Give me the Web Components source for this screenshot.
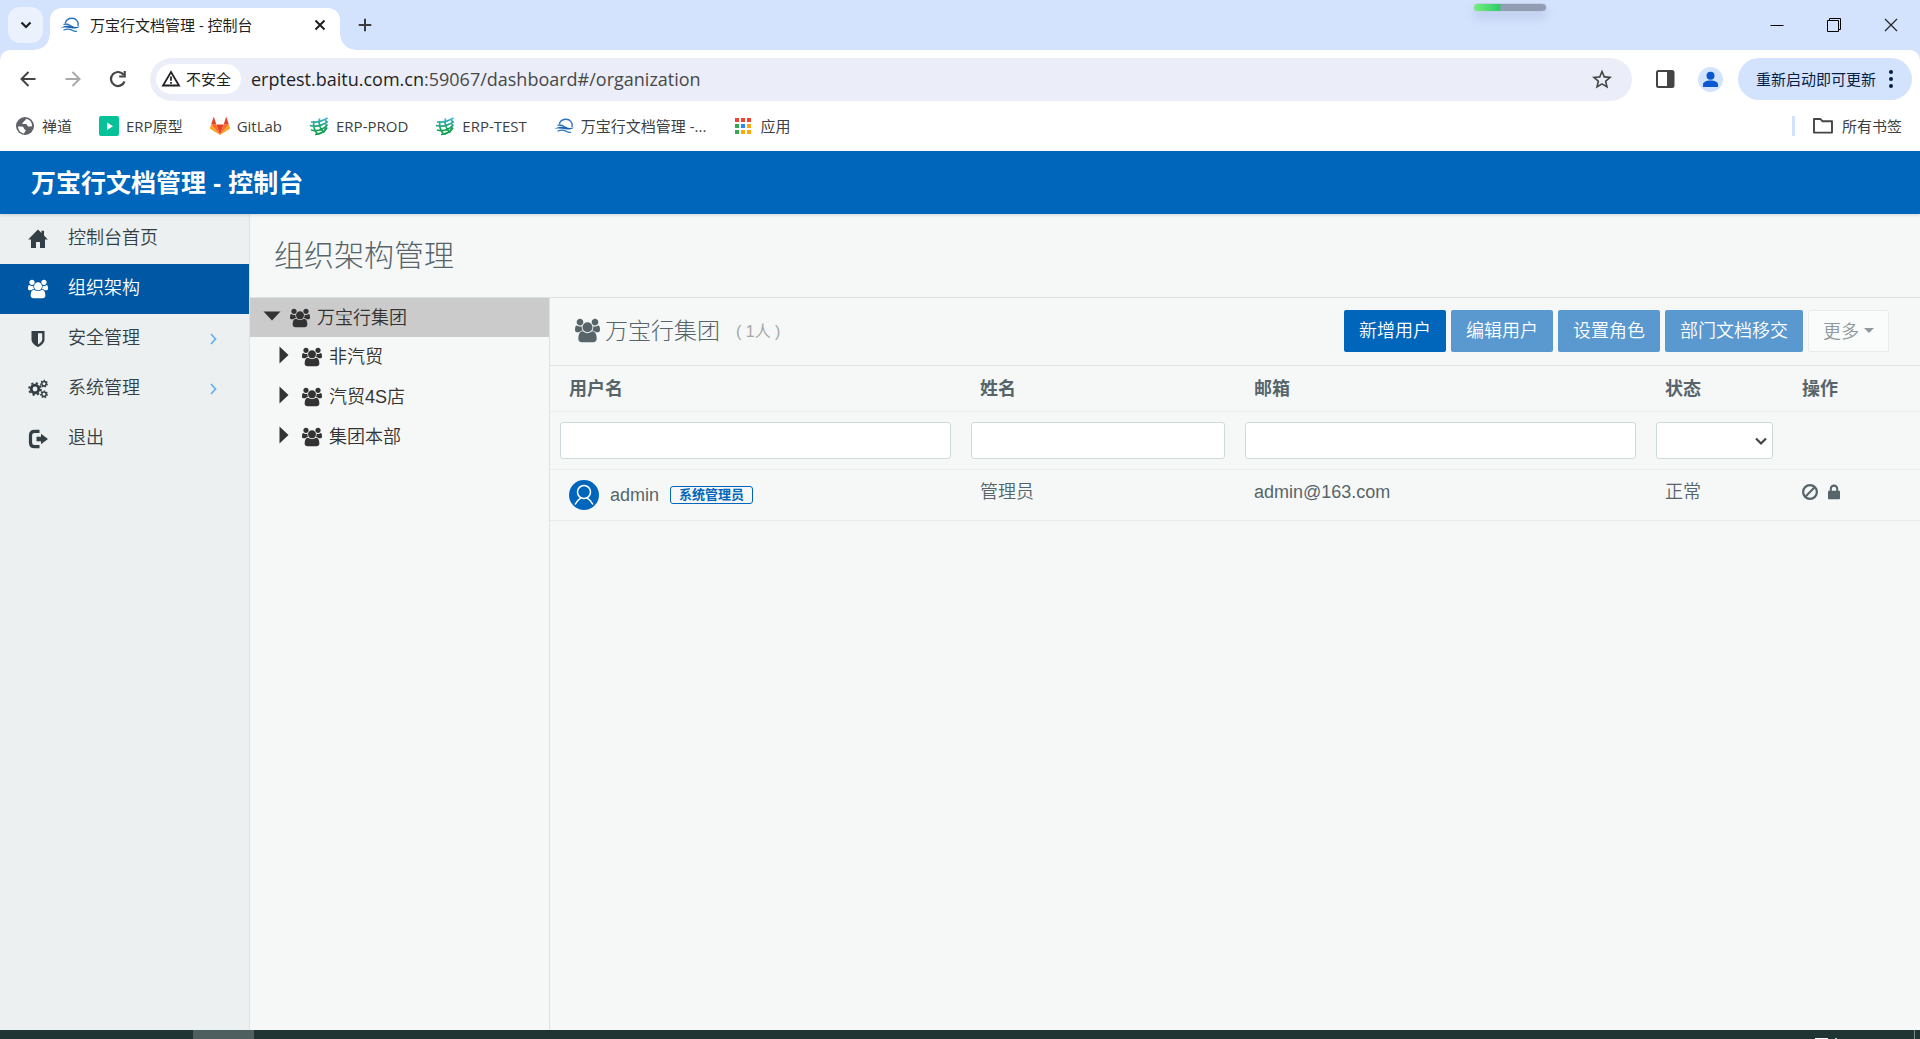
<!DOCTYPE html>
<html lang="zh-CN">
<head>
<meta charset="utf-8">
<title>万宝行文档管理 - 控制台</title>
<style>
  html, body { height: 100%; }
  body {
    margin: 0;
    display: flex;
    flex-direction: column;
    overflow: hidden;
    font-family: "Liberation Sans", "Noto Sans CJK SC", sans-serif;
    font-size: 18px;
    --chrome-font: "Open Sans", "Noto Sans CJK SC", sans-serif;
    --brand: #0066bb;
    --line: #dce2e2;
    --thin: 350;
  }
  main { flex: 1; display: flex; min-height: 0; background: #f5f8f7; }
</style>
</head>
<body>
<tab-strip><span>万宝行文档管理 - 控制台</span></tab-strip>
<address-bar>
  <span slot="status">不安全</span>
  <span slot="host">erptest.baitu.com.cn</span><span slot="path">:59067/dashboard#/organization</span>
  <span slot="update">重新启动即可更新</span>
</address-bar>
<bookmarks-bar>
  <bookmark-link icon="globe">禅道</bookmark-link>
  <bookmark-link icon="play">ERP原型</bookmark-link>
  <bookmark-link icon="fox">GitLab</bookmark-link>
  <bookmark-link icon="net">ERP-PROD</bookmark-link>
  <bookmark-link icon="net">ERP-TEST</bookmark-link>
  <bookmark-link icon="wave">万宝行文档管理 -...</bookmark-link>
  <bookmark-link icon="apps">应用</bookmark-link>
  <bookmark-link slot="end" icon="folder">所有书签</bookmark-link>
</bookmarks-bar>
<console-header>万宝行文档管理 - 控制台</console-header>
<main>
  <side-nav>
    <nav-item icon="home">控制台首页</nav-item>
    <nav-item icon="users" active>组织架构</nav-item>
    <nav-item icon="shield" more>安全管理</nav-item>
    <nav-item icon="cogs" more>系统管理</nav-item>
    <nav-item icon="logout">退出</nav-item>
  </side-nav>
  <organization-page>
    <span slot="title">组织架构管理</span>
    <org-tree slot="tree">
      <tree-row open>万宝行集团</tree-row>
      <tree-row child>非汽贸</tree-row>
      <tree-row child>汽贸4S店</tree-row>
      <tree-row child>集团本部</tree-row>
    </org-tree>
    <user-panel slot="content">
      <span slot="group">万宝行集团</span>
      <span slot="count">( 1人 )</span>
      <action-button slot="actions" kind="primary">新增用户</action-button>
      <action-button slot="actions" kind="primary" off>编辑用户</action-button>
      <action-button slot="actions" kind="primary" off>设置角色</action-button>
      <action-button slot="actions" kind="primary" off>部门文档移交</action-button>
      <action-button slot="actions" kind="plain" off>更多</action-button>
    </user-panel>
  </organization-page>
</main>
<task-bar></task-bar>

<script>
const ICONS = {
  wave: ['0 0 20 20', '<g fill="none" stroke="#2a74bd" stroke-linecap="round"><path d="M5.500 7.500C6.500 4.800 9 3.300 12 3.300c4 0 6.800 3.200 6 7.200" stroke-width="1.400"/><path d="M4 9.300c3-1.200 5.500.7 8.500 2.500" stroke-width="1.300"/><path d="M4 15c3-1.300 6-.8 8 .2 1.500.8 3 1.300 4.500 1.200" stroke-width="1.300"/></g><path fill="#1d64b0" d="M.2 12.800C4 10.300 9 10.300 12 11.200c2.500.8 5 .9 7.800.3-2 2-5.200 2.500-8.300 1.800-4-.9-7-1-11.300-.5z"/>'],
  chevDown: ['0 0 20 20', '<path d="M5.500 7.500 10 12l4.500-4.500" fill="none" stroke="#1f1f1f" stroke-width="2.200"/>'],
  close: ['0 0 20 20', '<path d="m5.500 5.500 9 9m0-9-9 9" fill="none" stroke="#1f1f1f" stroke-width="2"/>'],
  plus: ['0 0 20 20', '<path d="M10 3.700v12.600M3.700 10h12.600" fill="none" stroke="#3c3c3c" stroke-width="2"/>'],
  minimize: ['0 0 20 20', '<path d="M3.500 10.500h13" stroke="#000"/>'],
  restore: ['0 0 20 20', '<path d="M3.500 5.500h11v11h-11zM5.500 5.500v-2h11v11h-2" fill="none" stroke="#000"/>'],
  winClose: ['0 0 20 20', '<path d="m4 4 12 12m0-12L4 16" stroke="#222" stroke-width="1.200"/>'],
  back: ['0 0 20 20', '<path d="M17.500 10H4m6.500-7L3.500 10l7 7" fill="none" stroke="#444" stroke-width="2"/>'],
  forward: ['0 0 20 20', '<path d="M2.500 10H16M9.500 3l7 7-7 7" fill="none" stroke="#a9a9a9" stroke-width="2"/>'],
  reload: ['0 0 20 20', '<path d="M16.500 12.500A7 7 0 1 1 15.700 6" fill="none" stroke="#444" stroke-width="2.200"/><path fill="#444" d="M17.800 2v6.600h-6.600V6.500h4.500V2z"/>'],
  warn: ['0 0 20 20', '<path d="M10 3 18 16.500H2z" fill="none" stroke="#222" stroke-width="1.800"/><path d="M10 7.500v4.300M10 13v1.800" stroke="#222" stroke-width="1.800"/>'],
  star: ['2 1.500 20 20', '<path fill="#444" d="m22 9.240-7.190-.62L12 2 9.190 8.630 2 9.240l5.460 4.730L5.820 21 12 17.270 18.180 21l-1.630-7.030zM12 15.400l-3.760 2.270 1-4.280-3.320-2.880 4.380-.38L12 6.100l1.710 4.040 4.380.38-3.320 2.880 1 4.280z"/>'],
  panel: ['0 0 20 20', '<rect x="2" y="2" width="16.500" height="16" rx="1.500" fill="none" stroke="#444" stroke-width="2"/><path fill="#444" d="M12 2h6v16h-6z"/>'],
  person: ['0 0 25 25', '<circle cx="12.500" cy="12.500" r="12.500" fill="#d3e3fd"/><circle cx="12.500" cy="8.700" r="4" fill="#0b57d0"/><path fill="#0b57d0" d="M5 20v-2.500c0-2.500 3.500-4 7.500-4s7.500 1.500 7.500 4V20z"/>'],
  dots: ['0 0 20 20', '<g fill="#041e49"><circle cx="10" cy="3" r="2"/><circle cx="10" cy="10" r="2"/><circle cx="10" cy="17" r="2"/></g>'],
  globe: ['0 0 20 20', '<circle cx="10" cy="10" r="9" fill="#5f6368"/><path fill="#fff" d="M3 10.500c2 .3 3.800-.3 5.300.8 1 .8.300 1.700 1.500 2.200 1.300.5 1 1.500.2 2.200-.7.600-.6 1.300-1 1.900C5.500 17 3.200 14 3 10.500zM10.500 2.800c.6.800.2 1.600-.8 1.900-1 .3-.8 1.200-1.700 1.700-.9.600-.7 1.600.4 1.700 1.500.1 2.400-.5 3.300.4.900.8.500 1.800 1.800 2 1.300.2 2.300-.6 3.500-.3.300-4-2.500-7-6.500-7.400z"/>'],
  play: ['0 0 20 20', '<rect width="20" height="20" rx="2" fill="#06c298"/><path d="m8 6.500 6 3.700-6 3.700z" fill="#fff"/>'],
  fox: ['0 0 20 20', '<path fill="#e24329" d="m10 19 3.700-10.500H6.300z"/><path fill="#fc6d26" d="M10 19 6.300 8.500H1.200zM10 19l3.700-10.500h5.100z"/><path fill="#fca326" d="M1.200 8.500 0 12c-.1.400 0 .8.400 1L10 19zM18.800 8.500 20 12c.1.400 0 .8-.4 1L10 19z"/><path fill="#e24329" d="M1.200 8.500h5.100L4.100 1.600c-.1-.4-.6-.4-.7 0zM18.800 8.500h-5.100l2.200-6.900c.1-.4.6-.4.7 0z"/>'],
  net: ['0 0 20 20', '<defs><linearGradient id="g" gradientUnits="userSpaceOnUse" x1="10" x2="10" y1="2" y2="18"><stop stop-color="#3db2dc"/><stop offset=".7" stop-color="#12a053"/></linearGradient></defs><g fill="none" stroke="url(#g)" stroke-width="1.700"><path d="M2 6c5 .5 11-.5 16.500-4M.8 9.500c6 1.500 12 .5 18-4M2 14c6 1.500 12 0 16.500-5.500M6 18.500c5-.5 10-3 12-7M5 5c-1 4.500 0 9.500 4 13.500M10.500 2.500c-1 5 .5 10.500 4.500 14M16.500 3c1.500 4.500 1 9-2 13.500"/></g>'],
  apps: ['0 0 20 20', '<path fill="#f04336" d="M2 2h4v4H2zM8 2h4v4H8zM14 2h4v4h-4z"/><path fill="#34a853" d="M2 8h4v4H2zM2 14h4v4H2z"/><path fill="#2a8af6" d="M8 8h4v4H8z"/><path fill="#fbab05" d="M14 8h4v4h-4zM8 14h4v4H8zM14 14h4v4h-4z"/>'],
  folder: ['0 0 20 20', '<path d="M1 3h6.500l2 2.300H19v11.300H1z" fill="none" stroke="#444" stroke-width="1.900" stroke-linejoin="round"/>'],
  home: ['0 0 20 20', '<path fill="currentColor" d="M10 .5 13.500 4V1.800h2.500v4.700l3.800 4H17V19h-5v-6H8v6H3v-8.500H.2z"/>'],
  users: ['0 0 1920 1792', '<path fill="currentColor" d="M593 896q-162 5-265 128h-134q-82 0-138-40.500t-56-118.500q0-353 124-353 6 0 43.500 21t97.500 42.500 119 21.500q67 0 133-23-5 37-5 66 0 139 81 256zm1071 637q0 120-73 189.500t-194 69.500h-874q-121 0-194-69.500t-73-189.500q0-53 3.500-103.500t14-109 26.500-108.500 43-97.500 62-81 85.500-53.500 111.500-20q10 0 43 21.500t73 48 107 48 135 21.500 135-21.500 107-48 73-48 43-21.500q61 0 111.500 20t85.500 53.500 62 81 43 97.500 26.500 108.500 14 109 3.500 103.500zm-1024-1277q0 106-75 181t-181 75-181-75-75-181 75-181 181-75 181 75 75 181zm704 384q0 159-112.500 271.500t-271.500 112.500-271.500-112.500-112.500-271.500 112.500-271.500 271.500-112.500 271.500 112.500 112.500 271.500zm576 225q0 78-56 118.500t-138 40.500h-134q-103-123-265-128 81-117 81-256 0-29-5-66 66 23 133 23 59 0 119-21.500t97.500-42.500 43.500-21q124 0 124 353zm-128-609q0 106-75 181t-181 75-181-75-75-181 75-181 181-75 181 75 75 181z"/>'],
  shield: ['0 0 20 20', '<path fill="currentColor" fill-rule="evenodd" d="M3.500 2h13v8.500c0 3.500-3.500 6-6.500 7.500-3-1.500-6.500-4-6.500-7.500zM10 4.200v11.300c2-1.200 4.200-2.800 4.200-5V4.200z"/>'],
  cogs: ['0 0 20 20', '<g fill="none" stroke="currentColor"><circle cx="7" cy="10" r="3.800" stroke-width="2.800"/><circle cx="7" cy="10" r="5.900" stroke-width="1.800" stroke-dasharray="2.320 2.314"/><circle cx="16" cy="4.700" r="2.200" stroke-width="1.500"/><circle cx="16" cy="4.700" r="3.300" stroke-width="1.200" stroke-dasharray="1.480 1.480"/><circle cx="16" cy="15.300" r="2.200" stroke-width="1.500"/><circle cx="16" cy="15.300" r="3.300" stroke-width="1.200" stroke-dasharray="1.480 1.480"/></g>'],
  logout: ['0 0 20 20', '<path d="M11.500 2.300H6.500C4 2.300 2.500 3.800 2.500 6.300v7.400c0 2.500 1.500 4 4 4h5" fill="none" stroke="currentColor" stroke-width="3.200"/><path fill="currentColor" d="M13 4.800 20 10l-7 5.200V12.300H8.500V7.700H13z"/>'],
  chevRight: ['0 0 20 20', '<path d="m8 5 4.500 5L8 15" fill="none" stroke="#62aef5" stroke-width="1.700"/>'],
  caretDown: ['0 0 20 20', '<path fill="currentColor" d="M1.500 5.500h17L10 14.500z"/>'],
  caretRight: ['0 0 20 20', '<path fill="currentColor" d="M5.500 1.500 14.500 10l-9 8.500z"/>'],
  smallCaret: ['0 0 10 10', '<path fill="currentColor" d="M0 3h10L5 8z"/>'],
  selectArrow: ['0 0 12 12', '<path d="M1 3.500 6 8.500l5-5" fill="none" stroke="#444" stroke-width="2.200"/>'],
  avatar: ['0 0 30 30', '<circle cx="15" cy="15" r="15" fill="#0066bb"/><g fill="none" stroke="#fff" stroke-width="1.500"><circle cx="15" cy="12" r="6.500"/><path d="M6 24.500c1.500-3.500 3.700-5.200 6-6.700M24 24.500c-1.500-3.500-3.700-5.200-6-6.700"/></g>'],
  ban: ['0 0 20 20', '<circle cx="10" cy="10" r="8.600" fill="none" stroke="currentColor" stroke-width="2.800"/><path d="m15.500 4.500-11 11" stroke="currentColor" stroke-width="2.600"/>'],
  lock: ['0 0 20 20', '<path d="M6 9V6a4 4 0 0 1 8 0v3" fill="none" stroke="currentColor" stroke-width="2.600"/><rect x="2.500" y="8.300" width="15" height="10.700" rx="1" fill="currentColor"/>']
};

function define(name, css, html) {
  customElements.define(name, class extends HTMLElement {
    connectedCallback() {
      if (this.shadowRoot) return;
      const root = this.attachShadow({ mode: 'open' });
      const body = typeof html === 'function' ? html(this) : html;
      root.innerHTML = `<style>*{box-sizing:border-box}:host{box-sizing:border-box}:host([hidden]){display:none}button{font:inherit;border:0;padding:0;background:none;display:flex;align-items:center;justify-content:center;color:inherit}a{color:inherit;text-decoration:none}${css}</style>${body}`;
    }
  });
}

define('app-icon', ':host{display:inline-flex;flex:none;width:20px;height:20px}svg{width:100%;height:100%;display:block}', el => {
  const [box, shape] = ICONS[el.getAttribute('name')];
  return `<svg viewBox="${box}" aria-hidden="true">${shape}</svg>`;
});

define('tab-strip', `
  :host{display:flex;height:50px;flex:none;background:#d3e3fd;font:15px/20px var(--chrome-font);color:#1f1f1f;padding:0 0 0 8px;position:relative}
  .list{width:35px;height:36px;margin:7px 7px 0 0;border-radius:12px;background:#ebf2fe}
  .tab{position:relative;display:flex;align-items:center;width:290px;margin-top:8px;padding:0 10px 8px;background:#fff;border-radius:12px 12px 0 0}
  .tab::before,.tab::after{content:"";position:absolute;bottom:0;width:15px;height:15px}
  .tab::before{left:-15px;background:radial-gradient(circle at 0 0,#0000 14px,#fff 15px)}
  .tab::after{right:-15px;background:radial-gradient(circle at 100% 0,#0000 14px,#fff 15px)}
  .name{flex:1;padding-left:10px}
  .add{width:20px;height:20px;margin:15px 0 0 15px}
  .win{margin-left:auto;display:flex;align-items:center;height:49px;padding-right:1px}
  .win button{width:57px;height:49px}
  .meter{position:absolute;left:calc(77% - 5px);top:3px;width:74px;height:9px;border-radius:5px;background:linear-gradient(90deg,#74ef7c 0,#2fcb6c 26px,#929cb3 27px);border:1px solid #c3d0e6;box-shadow:0 6px 8px #8a9cc84d}
`, `<button class="list" aria-label="搜索标签页"><app-icon name="chevDown"></app-icon></button>
  <div class="tab"><app-icon name="wave"></app-icon><span class="name"><slot></slot></span><button aria-label="关闭"><app-icon name="close"></app-icon></button></div>
  <button class="add" aria-label="新标签页"><app-icon name="plus"></app-icon></button>
  <div class="meter"></div>
  <div class="win"><button aria-label="最小化"><app-icon name="minimize"></app-icon></button><button aria-label="还原"><app-icon name="restore"></app-icon></button><button aria-label="关闭窗口"><app-icon name="winClose"></app-icon></button></div>`);

define('address-bar', `
  :host{display:block;flex:none;background:#d3e3fd;font:15px/20px var(--chrome-font);color:#1f1f1f}
  .bar{display:flex;align-items:center;height:58px;padding:0 8px 0 18px;background:#fff;border-radius:10px 10px 0 0}
  .nav{display:flex;gap:25px;margin-right:22px}
  .url{flex:1;display:flex;align-items:center;height:43px;padding:0 20px 0 6px;border-radius:22px;background:#ebeef8}
  .chip{display:flex;align-items:center;gap:5px;height:30px;padding:0 10px 0 5px;margin-right:10px;border-radius:15px;background:#fff}
  .text{flex:1;font-size:18px;white-space:nowrap}
  .rest{color:#47484b}
  .tools{display:flex;align-items:center;gap:23px;margin:0 15px 0 23px}
  .tools app-icon.p{width:25px;height:25px}
  .update{height:42px;padding:0 11px 0 18px;gap:5px;border-radius:21px;background:#d3e3fd;color:#041e49}
`, `<div class="bar">
  <div class="nav"><button aria-label="后退"><app-icon name="back"></app-icon></button><button aria-label="前进"><app-icon name="forward"></app-icon></button><button aria-label="重新加载"><app-icon name="reload"></app-icon></button></div>
  <div class="url"><div class="chip"><app-icon name="warn"></app-icon><slot name="status"></slot></div><div class="text"><slot name="host"></slot><span class="rest"><slot name="path"></slot></span></div><button aria-label="收藏"><app-icon name="star"></app-icon></button></div>
  <div class="tools"><button aria-label="侧边栏"><app-icon name="panel"></app-icon></button><button aria-label="个人资料"><app-icon class="p" name="person"></app-icon></button></div>
  <button class="update"><slot name="update"></slot><app-icon name="dots"></app-icon></button></div>`);

define('bookmarks-bar', `
  :host{display:flex;flex:none;align-items:center;height:43px;padding:0 18px 8px 15px;background:#fff;font:15px/20px var(--chrome-font);color:#3c3f43}
  nav{display:flex;gap:27px}
  .end{margin-left:auto;display:flex;align-items:center;gap:18px}
  .end::before{content:"";width:3px;height:20px;background:#d3e3fd}
`, `<nav><slot></slot></nav><div class="end"><slot name="end"></slot></div>`);

define('bookmark-link', `:host{display:block}:host([slot=end]){--gap:9px}a{display:flex;align-items:center;gap:var(--gap,7px);white-space:nowrap}`,
  el => `<a href="#"><app-icon name="${el.getAttribute('icon')}"></app-icon><span><slot></slot></span></a>`);

define('console-header', `
  :host{display:flex;flex:none;align-items:center;height:63px;padding:0 31px;background:var(--brand);color:#fff;position:relative;box-shadow:0 1px 3px #00000026}
  h1{margin:0;font-size:25px;line-height:34px;font-weight:700}
`, `<h1><slot></slot></h1>`);

define('side-nav', `:host{display:block;flex:none;width:250px;background:#ecf0f1;border-right:1px solid var(--line)}`, `<nav><slot></slot></nav>`);

define('nav-item', `
  :host{display:block;color:#333f44}
  a{display:flex;align-items:center;height:50px;padding:0 26px 0 28px}
  :host([active]) a{background:#0057a3;color:#fff}
  .t{flex:1;margin-left:20px;line-height:24px;padding-bottom:3px;font-weight:var(--thin)}
`, el => `<a href="#"><app-icon name="${el.getAttribute('icon')}"></app-icon><span class="t"><slot></slot></span>${el.hasAttribute('more') ? '<app-icon name="chevRight"></app-icon>' : ''}</a>`);

define('organization-page', `
  :host{flex:1;min-width:0;display:flex;flex-direction:column;color:#57656b}
  h2{margin:0;display:flex;align-items:center;height:84px;padding:0 24px;border-bottom:1px solid var(--line);font-size:30px;line-height:40px;font-weight:300}
  .cols{flex:1;display:flex;min-height:0}
`, `<h2><slot name="title"></slot></h2><div class="cols"><slot name="tree"></slot><slot name="content"></slot></div>`);

define('org-tree', `:host{display:block;flex:none;width:300px;border-right:1px solid var(--line);color:#333}`, `<div role="tree"><slot></slot></div>`);

define('tree-row', `
  :host{display:flex;align-items:center;height:40px;padding-left:12px;font-weight:var(--thin)}
  :host([open]){height:39px;background:#cbcbcb}
  :host([child]){padding-left:24px}
  .c{padding-bottom:4px;height:24px}
  .u{margin:0 7px 0 8px}
  .t{line-height:24px}
`, el => `<app-icon class="c" name="${el.hasAttribute('open') ? 'caretDown' : 'caretRight'}"></app-icon><app-icon class="u" name="users"></app-icon><span class="t" role="treeitem"><slot></slot></span>`);

define('action-button', `
  :host{display:block}
  button{height:42px;padding:0 15px 4px;border-radius:2px;gap:5px;white-space:nowrap;font-weight:var(--thin)}
  .primary{background:var(--brand);color:#fff}
  .primary:disabled{background:#5999d0}
  .plain{background:#fafcfb;border:1px solid #e8edec;color:#8f989c;padding:0 14px 3px}
  .plain app-icon{width:10px;height:10px}
`, el => `<button class="${el.getAttribute('kind')}" ${el.hasAttribute('off') ? 'disabled' : ''}><slot></slot>${el.getAttribute('kind') === 'plain' ? '<app-icon name="smallCaret"></app-icon>' : ''}</button>`);

define('user-panel', `
  :host{flex:1;min-width:0;display:block;color:#57656b}
  header{display:flex;align-items:center;height:68px;padding:0 31px 0 25px;border-bottom:1px solid var(--line)}
  h3{margin:0;display:flex;align-items:center;gap:5px;padding-bottom:2px;font-size:23px;line-height:30px;font-weight:300}
  h3 app-icon{width:25px;height:25px}
  small{margin-left:16px;font-size:16px;line-height:20px;color:#a5a5a5}
  .acts{margin-left:auto;display:flex;gap:5px;padding-bottom:1px}
  table{width:100%;border-collapse:collapse;table-layout:fixed}
  th,td{padding:0 19px;text-align:left;border-bottom:1px solid #e9eeed;line-height:24px;font-weight:var(--thin)}
  thead th{height:45px;padding-top:1px;font-weight:700}
  .filter td{height:58px;padding:0 10px}
  .rec td{height:51px;padding-bottom:6px}
  .rec td:first-child{padding-bottom:0}
  input,select{display:block;width:100%;height:37px;border:1px solid #ccdadb;border-radius:3px;background:#fff;font:inherit;color:#444}
  select{appearance:none;padding:0 24px 0 10px}
  .pick{position:relative}
  .pick app-icon{position:absolute;right:6px;top:13px;width:12px;height:12px;pointer-events:none}
  .who{display:flex;align-items:center;gap:11px}
  .who app-icon{width:30px;height:30px}
  .badge{height:18px;padding:0 8px;border:1px solid var(--brand);border-radius:3px;color:var(--brand);font-size:13px;line-height:16px;font-weight:700;white-space:nowrap}
  .ops{display:flex;gap:8px}
  .ops app-icon{width:16px;height:16px}
`, `<header><h3><app-icon name="users"></app-icon><slot name="group"></slot></h3><small><slot name="count"></slot></small><div class="acts"><slot name="actions"></slot></div></header>
  <table>
    <colgroup><col style="width:30%"><col style="width:20%"><col style="width:30%"><col style="width:10%"><col style="width:10%"></colgroup>
    <thead><tr><th id="u">用户名</th><th id="n">姓名</th><th id="e">邮箱</th><th id="s">状态</th><th>操作</th></tr></thead>
    <tbody>
      <tr class="filter"><td><input type="text" aria-labelledby="u"></td><td><input type="text" aria-labelledby="n"></td><td><input type="text" aria-labelledby="e"></td><td><div class="pick"><select aria-labelledby="s"><option></option></select><app-icon name="selectArrow"></app-icon></div></td><td></td></tr>
      <tr class="rec"><td><div class="who"><app-icon name="avatar"></app-icon><span>admin</span><span class="badge">系统管理员</span></div></td><td>管理员</td><td>admin@163.com</td><td>正常</td><td><div class="ops"><button aria-label="禁用"><app-icon name="ban"></app-icon></button><button aria-label="锁定"><app-icon name="lock"></app-icon></button></div></td></tr>
    </tbody>
  </table>`);

define('task-bar', `
  :host{display:flex;flex:none;height:9px;background:#203434;padding:0 5px 0 193px}
  .run{width:61px;background:#4f5f5f}
  .tray{margin-left:auto;display:flex;align-items:flex-end}
  .a{width:13px;height:1px;background:#fff;margin-right:7px}
  .b{width:2px;height:1px;background:#cdd3d3;margin-right:77px}
  .edge{width:1px;height:9px;background:#7b8888}
`, `<div class="run"></div><div class="tray"><i class="a"></i><i class="b"></i><i class="edge"></i></div>`);
</script>
</body>
</html>
